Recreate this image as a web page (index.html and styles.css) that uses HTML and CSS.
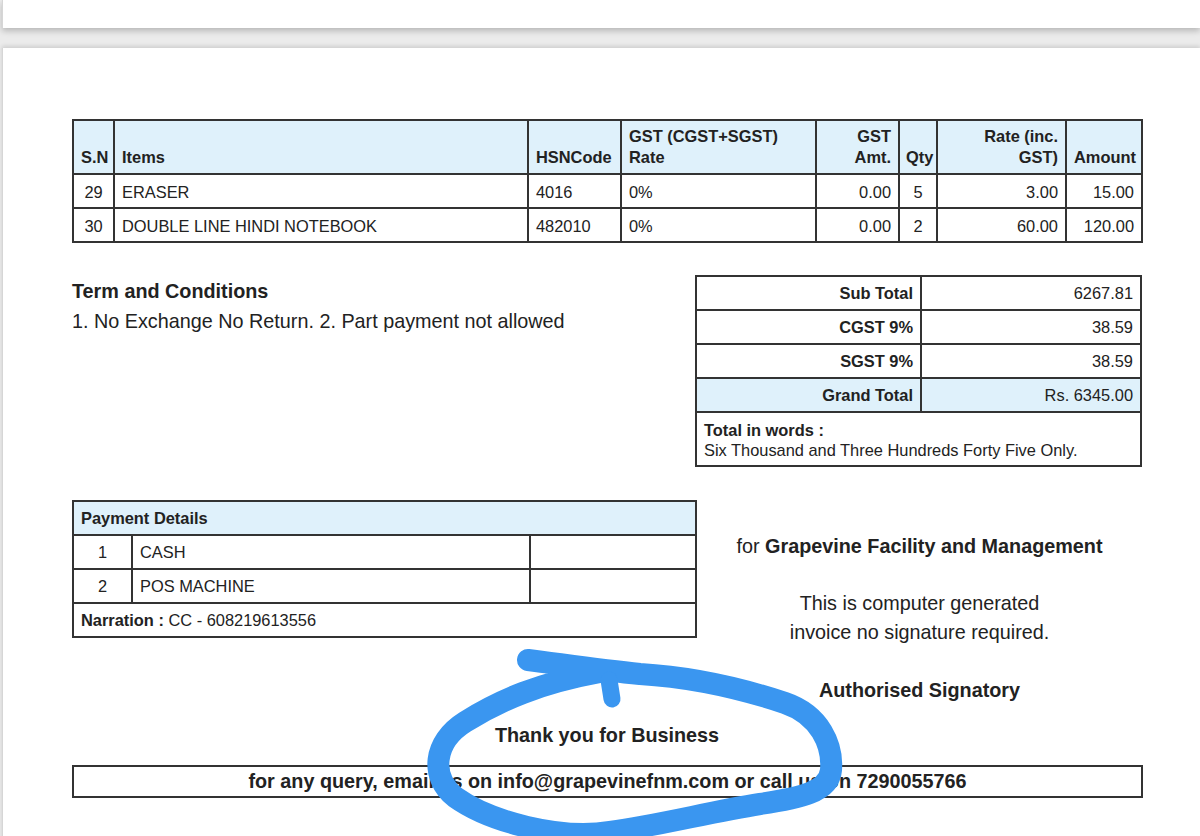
FILE: index.html
```html
<!DOCTYPE html>
<html lang="en">
<head>
<meta charset="utf-8">
<title>Invoice</title>
<link rel="stylesheet" href="styles.css">
</head>
<body>
<div class="viewer">
  <div class="page page-prev"></div>
  <div class="page page-cur">
    <table class="items">
      <colgroup>
        <col class="c-sn"><col class="c-item"><col class="c-hsn"><col class="c-gst"><col class="c-amt"><col class="c-qty"><col class="c-rate"><col class="c-total">
      </colgroup>
      <thead>
        <tr>
          <th class="center">S.N</th>
          <th>Items</th>
          <th>HSNCode</th>
          <th>GST (CGST+SGST)<br>Rate</th>
          <th class="right">GST<br>Amt.</th>
          <th class="qty-head">Qty</th>
          <th class="right">Rate (inc.<br>GST)</th>
          <th class="right">Amount</th>
        </tr>
      </thead>
      <tbody>
        <tr>
          <td class="center">29</td>
          <td>ERASER</td>
          <td>4016</td>
          <td>0%</td>
          <td class="right">0.00</td>
          <td class="center">5</td>
          <td class="right">3.00</td>
          <td class="right">15.00</td>
        </tr>
        <tr>
          <td class="center">30</td>
          <td>DOUBLE LINE HINDI NOTEBOOK</td>
          <td>482010</td>
          <td>0%</td>
          <td class="right">0.00</td>
          <td class="center">2</td>
          <td class="right">60.00</td>
          <td class="right">120.00</td>
        </tr>
      </tbody>
    </table>

    <div class="mid">
      <div class="terms">
        <div class="terms-title">Term and Conditions</div>
        <div class="terms-text">1. No Exchange No Return. 2. Part payment not allowed</div>
      </div>
      <table class="summary">
        <colgroup><col class="s-label"><col class="s-value"></colgroup>
        <tbody>
          <tr><th>Sub Total</th><td>6267.81</td></tr>
          <tr><th>CGST 9%</th><td>38.59</td></tr>
          <tr><th>SGST 9%</th><td>38.59</td></tr>
          <tr class="grand"><th>Grand Total</th><td>Rs. 6345.00</td></tr>
          <tr class="words"><td colspan="2"><b>Total in words :</b><br>Six Thousand and Three Hundreds Forty Five Only.</td></tr>
        </tbody>
      </table>
    </div>

    <div class="bottom">
      <table class="payment">
        <colgroup><col class="p-no"><col class="p-mode"><col class="p-amt"></colgroup>
        <tbody>
          <tr class="p-head"><th colspan="3">Payment Details</th></tr>
          <tr><td class="center">1</td><td>CASH</td><td></td></tr>
          <tr><td class="center">2</td><td>POS MACHINE</td><td></td></tr>
          <tr><td colspan="3"><b>Narration :</b> CC - 608219613556</td></tr>
        </tbody>
      </table>
      <div class="sign">
        <div class="for-co">for <b>Grapevine Facility and Management</b></div>
        <div class="note">This is computer generated<br>invoice no signature required.</div>
        <div class="signatory">Authorised Signatory</div>
      </div>
    </div>

    <div class="thanks">Thank you for Business</div>
    <div class="contact">for any query, email us on info@grapevinefnm.com or call us on 7290055766</div>
  </div>

  <svg class="scribble" width="1200" height="836" viewBox="0 0 1200 836" aria-hidden="true">
    <path d="M 528 660 C 560 664, 600 670, 640 674 C 690 677, 740 688, 785 703 C 820 715, 833 745, 831 770 C 829 792, 800 798, 760 804 C 710 812, 660 825, 610 832 C 560 840, 490 822, 455 797 C 430 777, 433 742, 465 722 C 500 700, 540 683, 600 672" />
    <path class="tick" d="M 609 680 L 612 699" />
  </svg>
</div>
</body>
</html>
```

FILE: styles.css
```css
* { box-sizing: border-box; }

html, body {
  margin: 0;
  padding: 0;
}

body {
  width: 1200px;
  height: 836px;
  overflow: hidden;
  background: #ebebeb;
  font-family: "Liberation Sans", Arial, sans-serif;
  color: #222;
}

.viewer {
  position: relative;
  width: 1200px;
  height: 836px;
  overflow: hidden;
}

.page {
  background: #fff;
  margin-left: 2px;
  border-left: 1px solid #d6d6d6;
}

.page-prev {
  height: 28px;
  box-shadow: 0 3px 6px rgba(0, 0, 0, 0.22);
}

.page-cur {
  margin-top: 20px;
  height: 900px;
  padding: 71px 58px 0 69px;
  box-shadow: 0 -2px 4px rgba(0, 0, 0, 0.12);
}

/* tables */
table {
  border-collapse: collapse;
  table-layout: fixed;
  font-size: 16.4px;
}

th, td {
  border: 2px solid #333;
  padding: 0 7px;
  text-align: left;
  white-space: nowrap;
}

.center { text-align: center; }
.right { text-align: right; }

.items {
  width: 1069px;
}

.items th {
  background: #dff1fb;
  font-weight: bold;
  vertical-align: bottom;
  line-height: 21px;
  height: 54px;
  padding-bottom: 5px;
}

.items th.qty-head {
  padding-left: 6px;
  padding-right: 2px;
}

.items td {
  height: 34px;
  line-height: 20px;
  padding-top: 1px;
}

.c-sn { width: 41px; }
.c-item { width: 414px; }
.c-hsn { width: 93px; }
.c-gst { width: 195px; }
.c-amt { width: 83px; }
.c-qty { width: 38px; }
.c-rate { width: 129px; }
.c-total { width: 76px; }

/* middle */
.mid {
  display: flex;
  justify-content: space-between;
  margin-top: 32px;
}

.terms {
  font-size: 19.8px;
  line-height: 30px;
  padding-top: 1px;
}

.terms-title { font-weight: bold; }

.summary {
  width: 445px;
}

.s-label { width: 225px; }
.s-value { width: 220px; }

.summary th {
  text-align: right;
  font-weight: bold;
  height: 34px;
}

.summary td {
  text-align: right;
  height: 34px;
}

.summary .grand th,
.summary .grand td {
  background: #dff1fb;
}

.summary .words td {
  text-align: left;
  height: 54px;
  line-height: 20px;
  padding-top: 1px;
}

/* bottom */
.bottom {
  display: flex;
  margin-top: 33px;
}

.payment {
  width: 623px;
  align-self: flex-start;
}

.p-no { width: 59px; }
.p-mode { width: 398px; }
.p-amt { width: 166px; }

.payment th,
.payment td {
  height: 34px;
}

.payment .p-head th {
  background: #dff1fb;
  font-weight: bold;
}

.sign {
  flex: 1;
  text-align: center;
  font-size: 19.8px;
  line-height: 24px;
  padding-top: 34px;
}

.note {
  margin-top: 31px;
  line-height: 29px;
}

.signatory {
  margin-top: 31px;
  font-weight: bold;
}

.thanks {
  margin-top: 21px;
  text-align: center;
  font-size: 19.8px;
  line-height: 24px;
  font-weight: bold;
}

.contact {
  margin-top: 18px;
  width: 1071px;
  height: 33px;
  border: 2px solid #333;
  text-align: center;
  font-size: 19.8px;
  line-height: 29px;
  font-weight: bold;
}

/* hand-drawn annotation overlay */
.scribble {
  position: absolute;
  left: 0;
  top: 0;
  pointer-events: none;
}

.scribble path {
  fill: none;
  stroke: #3a96f0;
  stroke-width: 22;
  stroke-linecap: round;
  stroke-linejoin: round;
}

.scribble .tick {
  stroke-width: 17;
}
```
